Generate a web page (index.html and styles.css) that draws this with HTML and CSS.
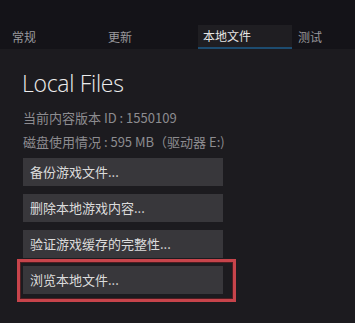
FILE: index.html
```html
<!DOCTYPE html>
<html lang="zh-CN">
<head>
    <meta charset="UTF-8">
    <title>本地文件</title>
    <link rel="stylesheet" href="styles.css">
</head>
<body>
    <div class="top">
        <div class="tabs">
            <div class="tab tab-general">常规</div>
            <div class="tab tab-update">更新</div>
            <div class="tab tab-local active">本地文件</div>
            <div class="tab tab-beta">测试</div>
        </div>
    </div>

    <div class="content">
        <h1 class="title">Local Files</h1>
        <p class="info">当前内容版本 ID : 1550109</p>
        <p class="info">磁盘使用情况 : 595 MB（驱动器 E:)</p>

        <div class="actions">
            <div class="btn">备份游戏文件...</div>
            <div class="btn">删除本地游戏内容...</div>
            <div class="btn">验证游戏缓存的完整性...</div>
            <div class="btn-wrap">
                <div class="btn">浏览本地文件...</div>
                <div class="highlight-box"></div>
            </div>
        </div>
    </div>
</body>
</html>
```

FILE: styles.css
```css
body {
    margin: 0;
    background: #1c1b1f;
    font-family: "Noto Sans CJK SC", "Open Sans", sans-serif;
    color: #d6d6d6;
    height: 323px;
    overflow: hidden;
}

.top {
    background: #141318;
    height: 49px;
    display: flex;
    align-items: flex-end;
}

.tabs {
    display: flex;
    height: 24px;
}

.tab {
    font-size: 12px;
    line-height: 24px;
    color: #9a999d;
    box-sizing: border-box;
}

.tab-general { width: 96px; padding-left: 12px; }
.tab-update  { width: 102px; padding-left: 12px; }
.tab-local   { width: 94px; padding-left: 5px; }
.tab-beta    { width: 60px; padding-left: 6px; }

.tab.active {
    background: #1f1e22;
    color: #e6e6e6;
    border-bottom: 2px solid #1d4c70;
    line-height: 22px;
}

.content {
    padding: 19px 0 0 23px;
}

.title {
    margin: 0 0 0 -1px;
    font-family: "Open Sans", sans-serif;
    font-weight: 300;
    font-size: 23px;
    letter-spacing: -0.3px;
    line-height: 30px;
    color: #ececec;
}

.info {
    margin: 0;
    font-size: 13px;
    line-height: 24px;
    color: #8d8c90;
}

.info:first-of-type {
    margin-top: 8px;
}

.actions {
    margin-top: 4px;
    display: flex;
    flex-direction: column;
    gap: 8px;
}

.btn {
    width: 200px;
    height: 28px;
    line-height: 28px;
    padding-left: 7px;
    box-sizing: border-box;
    background: #38373b;
    font-size: 13px;
    color: #dcdcdc;
}

.btn-wrap {
    position: relative;
}

.highlight-box {
    position: absolute;
    left: -6px;
    top: -7px;
    width: 219px;
    height: 43px;
    box-sizing: border-box;
    border: 3px solid #c7444b;
    box-shadow: inset 0 0 0 1px #4e1e22;
}
```
